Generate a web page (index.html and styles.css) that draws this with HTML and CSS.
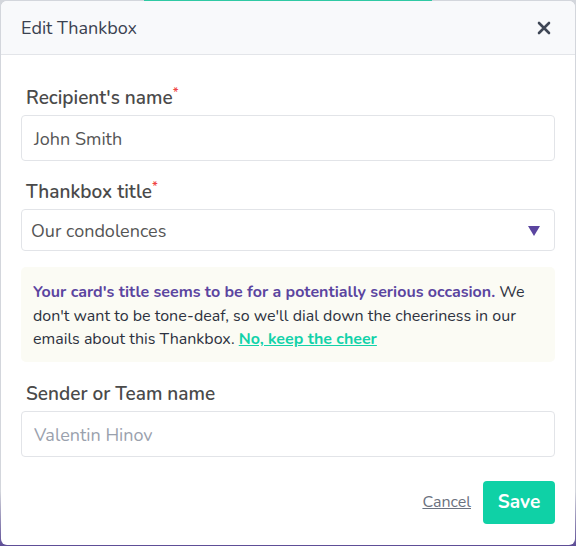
FILE: index.html
```html
<!DOCTYPE html>
<html>
<head>
<meta charset="utf-8">
<link rel="stylesheet" href="styles.css">
</head>
<body>
<div class="backdrop-line"></div>
<div class="modal">
  <div class="modal-header">
    <span class="modal-title">Edit Thankbox</span>
    <svg class="close" width="14" height="14" viewBox="0 0 14 14"><path d="M2 2 L12 12 M12 2 L2 12" stroke="#3f4756" stroke-width="2.6" stroke-linecap="round"/></svg>
  </div>
  <div class="modal-body">
    <label class="label">Recipient's name<span class="req">*</span></label>
    <div class="input">John Smith</div>
    <label class="label">Thankbox title<span class="req">*</span></label>
    <div class="input select">
      <span>Our condolences</span>
      <svg width="12" height="10" viewBox="0 0 12 10"><path d="M0 0 H12 L6 10 Z" fill="#5b45a0"/></svg>
    </div>
    <div class="notice">
      <strong class="notice-strong">Your card's title seems to be for a potentially serious occasion.</strong> We don't want to be tone-deaf, so we'll dial down the cheeriness in our emails about this Thankbox. <a class="notice-link">No, keep the cheer</a>
    </div>
    <label class="label">Sender or Team name</label>
    <div class="input placeholder">Valentin Hinov</div>
    <div class="footer">
      <a class="cancel">Cancel</a>
      <button class="save">Save</button>
    </div>
  </div>
</div>
</body>
</html>
```
FILE: styles.css
```css
* { box-sizing: border-box; }
html, body { margin: 0; padding: 0; }
body {
  width: 576px;
  height: 546px;
  background: linear-gradient(180deg, #d3d6dc 0%, #d3d6dc 90%, #5d4d96 100%);
  font-family: "Nunito", "Lato", "Open Sans", sans-serif;
  position: relative;
  overflow: hidden;
  padding: 1px 1px 1px 1px;
}
.backdrop-line {
  position: absolute;
  top: 0;
  left: 144px;
  width: 288px;
  height: 2px;
  background: #2fc9a4;
}
.modal {
  position: relative;
  background: #fff;
  border-radius: 6px;
  height: 544px;
  overflow: hidden;
}
.modal-header {
  height: 54px;
  background: #f8f9fb;
  border-bottom: 1px solid #e3e5e9;
  display: flex;
  align-items: center;
  justify-content: space-between;
  padding: 0 24px 0 20px;
}
.modal-title {
  font-size: 18px;
  color: #3a4150;
}
.close { display: block; }
.modal-body {
  padding: 28px 20px 20px 20px;
  display: flex;
  flex-direction: column;
}
.label {
  font-size: 19px;
  font-weight: 600;
  color: #4a4a4a;
  line-height: 26px;
  padding: 2px 0 0 5px;
  margin-bottom: 4px;
}
.req {
  color: #ef4444;
  font-size: 13px;
  vertical-align: top;
  line-height: 16px;
}
.input {
  height: 46px;
  border: 1px solid #e2e4e8;
  border-radius: 4px;
  padding: 1px 12px 0 12px;
  display: flex;
  align-items: center;
  font-size: 18px;
  color: #555;
  margin-bottom: 16px;
}
.select {
  height: 42px;
  justify-content: space-between;
  padding: 2px 12px 0 9px;
}
.select svg { margin-right: 2px; margin-top: -1px; }
.placeholder { color: #9aa1ad; margin-bottom: 24px; padding-top: 2px; }
.notice {
  background: #fbfbf4;
  border-radius: 5px;
  padding: 14px 12px 10px 12px;
  font-size: 16px;
  line-height: 23.5px;
  color: #2d3240;
  margin-bottom: 17px;
}
.notice-strong { color: #5b45a0; font-weight: 700; }
.notice-link { color: #12d2a9; font-weight: 700; text-decoration: underline; }
.footer {
  display: flex;
  justify-content: flex-end;
  align-items: center;
  gap: 12px;
}
.cancel {
  font-size: 16px;
  color: #6b7280;
  text-decoration: underline;
}
.save {
  background: #0fd1a6;
  border: none;
  border-radius: 4px;
  color: #fff;
  font-family: inherit;
  font-weight: 700;
  font-size: 19px;
  width: 72px;
  height: 43px;
  padding-top: 1px;
}
```
